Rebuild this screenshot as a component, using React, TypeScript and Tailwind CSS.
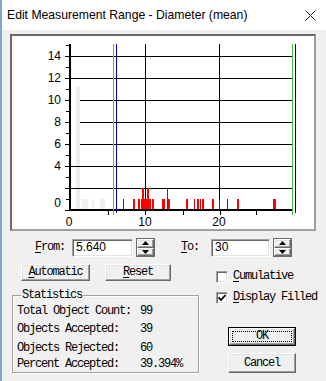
import React from "react";

const mono = "font-['Liberation_Mono',monospace] text-[12px] leading-[13px] tracking-[-1.2px] text-black";
const raised =
  "border border-t-white border-l-white border-r-[#696969] border-b-[#696969] shadow-[inset_-1px_-1px_0_#a0a0a0,inset_1px_1px_0_#e3e3e3] bg-[#f0f0f0]";
const sunken =
  "border border-t-[#a0a0a0] border-l-[#a0a0a0] border-b-white border-r-white shadow-[inset_1px_1px_0_#696969,inset_-1px_-1px_0_#e3e3e3] bg-white";

function U({ c }: { c: string }) {
  return <span className="underline underline-offset-2">{c}</span>;
}

function Spinner() {
  return (
    <div className="flex flex-col w-[19px] h-[19px] border border-[#696969]">
      <div className={`flex-1 flex items-center justify-center ${raised}`}>
        <svg width="7" height="4" viewBox="0 0 7 4">
          <path d="M3.5 0 L7 4 L0 4 Z" fill="#000" />
        </svg>
      </div>
      <div className={`flex-1 flex items-center justify-center ${raised}`}>
        <svg width="7" height="4" viewBox="0 0 7 4">
          <path d="M0 0 L7 0 L3.5 4 Z" fill="#000" />
        </svg>
      </div>
    </div>
  );
}

function Check({ checked }: { checked?: boolean }) {
  return (
    <div className={`w-[12px] h-[12px] ${sunken} flex items-center justify-center`}>
      {checked && (
        <svg width="8" height="8" viewBox="0 0 8 8">
          <path d="M0.5 3.5 L3 6 L7.5 1" stroke="#000" strokeWidth="1.8" fill="none" />
        </svg>
      )}
    </div>
  );
}

const redBars: [number, number, number][] = [
  [123, 1, 199],
  [133, 2, 199],
  [138, 2, 199],
  [141, 10, 199],
  [142, 2, 188],
  [147, 2, 188],
  [152, 2, 199],
  [162, 3, 199],
  [167, 1, 188],
  [168, 2, 199],
  [186, 2, 199],
  [194, 1, 199],
  [197, 2, 199],
  [200, 1, 199],
  [202, 2, 199],
  [212, 2, 199],
  [219, 1, 199],
  [227, 1, 199],
  [237, 2, 199],
  [273, 3, 199],
];

function Chart() {
  const major = [56, 78, 100, 122, 144, 166, 188];
  const minor = [45, 67, 89, 111, 133, 155, 177, 199];
  const labels: [string, number][] = [
    ["14", 56],
    ["12", 78],
    ["10", 100],
    ["8", 122],
    ["6", 144],
    ["4", 166],
    ["0", 203],
  ];
  return (
    <svg width="302" height="193" className="block">
      <g transform="translate(-12,-36)" fontFamily="Liberation Sans, Arial, sans-serif" fontSize="12">
        {/* rejected bars */}
        <rect x="76" y="87" width="4" height="122" fill="#ececec" />
        <rect x="82" y="199" width="6" height="10" fill="#f0f0f0" />
        <rect x="92" y="199" width="2" height="10" fill="#f0f0f0" />
        <rect x="100" y="199" width="5" height="10" fill="#ececec" />
        {/* horizontal grid */}
        {major.map((y) => (
          <line
            key={y}
            x1={y >= 100 && y <= 144 ? 80 : 71}
            x2="292"
            y1={y + 0.5}
            y2={y + 0.5}
            stroke="#000"
          />
        ))}
        {/* vertical grid */}
        <line x1="145.5" x2="145.5" y1="44" y2="209" stroke="#000" />
        <line x1="219.5" x2="219.5" y1="44" y2="209" stroke="#000" />
        {/* bars */}
        {redBars.map(([x, w, y], i) => (
          <rect key={i} x={x} y={y} width={w} height={209 - y} fill={w === 1 ? "#d00000" : "#ff0000"} />
        ))}
        {/* axes */}
        <rect x="69" y="44" width="2" height="167" fill="#000" />
        <rect x="69" y="209" width="224" height="2" fill="#000" />
        {major.concat([210]).map((y) => (
          <rect key={"M" + y} x="65" y={y} width="5" height="1" fill="#000" />
        ))}
        {minor.map((y) => (
          <rect key={"m" + y} x="66" y={y} width="4" height="1" fill="#000" />
        ))}
        {[108, 145, 183, 220, 256].map((x) => (
          <rect key={"t" + x} x={x} y="211" width="1" height="4" fill="#000" />
        ))}
        {/* range lines */}
        <rect x="113" y="44" width="1" height="171" fill="#3fc83f" />
        <rect x="116" y="44" width="1" height="169" fill="#0000a8" />
        <rect x="292" y="44" width="1" height="171" fill="#3fc83f" />
        <rect x="295" y="44" width="1" height="169" fill="#0000a8" />
        {/* labels */}
        {labels.map(([t, y]) => (
          <text key={t} x="61" y={y + 4} textAnchor="end" fill="#000">
            {t}
          </text>
        ))}
        {[
          ["0", 69],
          ["10", 145],
          ["20", 219],
        ].map(([t, x]) => (
          <text key={t} x={x} y="226" textAnchor="middle" fill="#000">
            {t}
          </text>
        ))}
      </g>
    </svg>
  );
}

export default function App() {
  return (
    <div className="w-[326px] h-[381px] bg-[#f0f0f0] border-l-2 border-[#7ea7d8] overflow-hidden">
      {/* title bar */}
      <div className="h-[30px] bg-white flex items-center pl-[5px] pr-[10px] font-['Liberation_Sans',Arial,sans-serif] text-[12.2px] text-black">
        <span className="flex-1">Edit Measurement Range - Diameter (mean)</span>
        <svg width="11" height="11" viewBox="0 0 11 11">
          <path d="M0.5 0.5 L10.5 10.5 M10.5 0.5 L0.5 10.5" stroke="#222" strokeWidth="1" />
        </svg>
      </div>

      {/* chart panel */}
      <div className="ml-[8px] mt-[4px] w-[306px] h-[197px] border-2 border-t-[#696969] border-l-[#696969] border-r-[#a0a0a0] border-b-[#a0a0a0] bg-white">
        <Chart />
      </div>

      {/* from / to */}
      <div className={`flex items-center h-[19px] mt-[7px] ${mono}`}>
        <span className="ml-[33px] w-[37px]">
          <U c="F" />rom:
        </span>
        <div className={`w-[61px] h-[18px] ${sunken} flex items-center pl-[3px] font-['Liberation_Sans',Arial,sans-serif] tracking-normal`}>
          5.640
        </div>
        <div className="ml-[3px]">
          <Spinner />
        </div>
        <span className="ml-[26px] w-[30px]">
          <U c="T" />o:
        </span>
        <div className={`w-[59px] h-[18px] ${sunken} flex items-center pl-[3px] font-['Liberation_Sans',Arial,sans-serif] tracking-normal`}>
          30
        </div>
        <div className="ml-[3px]">
          <Spinner />
        </div>
      </div>

      {/* buttons row */}
      <div className={`flex items-start h-[17px] mt-[7px] ${mono}`}>
        <button className={`ml-[19px] w-[69px] h-[17px] ${raised} flex items-center justify-center`}>
          <U c="A" />utomatic
        </button>
        <button className={`ml-[15px] w-[66px] h-[17px] ${raised} flex items-center justify-center`}>
          <U c="R" />eset
        </button>
        <div className="ml-[45px] mt-[6px] h-[13px] flex items-center gap-[5px]">
          <Check />
          <span>
            <U c="C" />umulative
          </span>
        </div>
      </div>

      {/* stats + actions */}
      <div className={`flex mt-[8px] ${mono}`}>
        <fieldset className="ml-[10px] w-[187px] h-[84px] border border-[#a0a0a0] shadow-[inset_1px_1px_0_#fff,1px_1px_0_#fff] pl-[4px]">
          <legend className="ml-[4px] px-[1px] leading-[12px]">Statistics</legend>
          <div className="pt-[2px]">
            {[
              ["Total Object Count:", "99", 18],
              ["Objects Accepted:", "39", 19],
              ["Objects Rejected:", "60", 16],
              ["Percent Accepted:", "39.394%", 16],
            ].map(([l, v, h]) => (
              <div key={l as string} className="flex leading-[16px]" style={{ height: h as number }}>
                <span className="w-[123px]">{l}</span>
                <span>{v}</span>
              </div>
            ))}
          </div>
        </fieldset>
        <div className="ml-[17px] flex flex-col">
          <div className="mt-[2px] h-[13px] flex items-center gap-[5px]">
            <Check checked />
            <span>
              <U c="D" />isplay Filled
            </span>
          </div>
          <button className="ml-[12px] mt-[23px] w-[68px] h-[19px] border border-black flex">
            <span className={`flex-1 ${raised} flex items-center justify-center p-[2px]`}>
              <span className="w-full h-full border border-dotted border-black flex items-center justify-center">
                OK
              </span>
            </span>
          </button>
          <button className={`ml-[12px] mt-[7px] w-[68px] h-[20px] ${raised} flex items-center justify-center`}>
            Cancel
          </button>
        </div>
      </div>
    </div>
  );
}
